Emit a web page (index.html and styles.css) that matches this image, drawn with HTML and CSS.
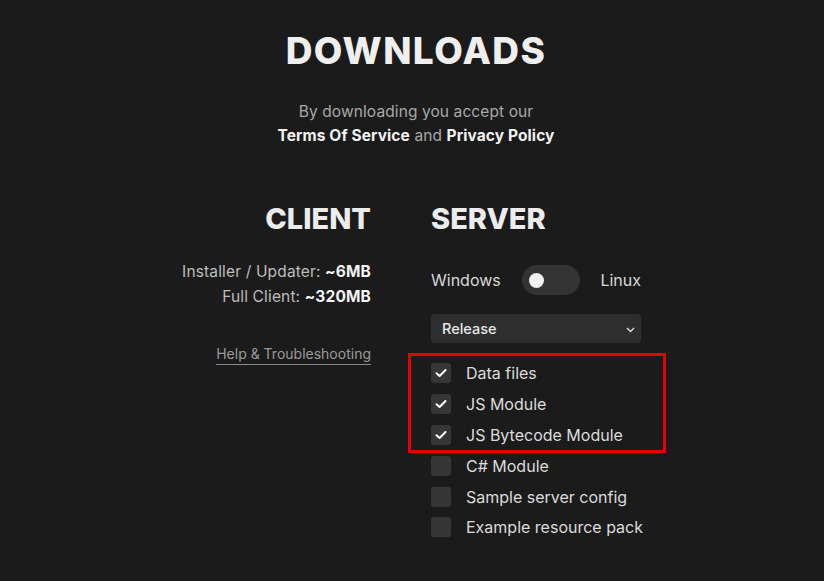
FILE: index.html
```html
<!DOCTYPE html>
<html lang="en">
<head>
<meta charset="utf-8">
<title>Downloads</title>
<link rel="stylesheet" href="styles.css">
</head>
<body>
<div class="page">
  <header class="header">
    <h1 class="title">DOWNLOADS</h1>
    <p class="terms">By downloading you accept our<br><a class="strong-link">Terms Of Service</a> and <a class="strong-link">Privacy Policy</a></p>
  </header>
  <main class="columns">
    <section class="col client">
      <h2 class="col-title">CLIENT</h2>
      <div class="info">
        <div>Installer / Updater: <b>~6MB</b></div>
        <div>Full Client: <b>~320MB</b></div>
      </div>
      <a class="help">Help &amp; Troubleshooting</a>
    </section>
    <section class="col server">
      <h2 class="col-title">SERVER</h2>
      <div class="os-row">
        <span class="os-label">Windows</span>
        <span class="toggle"><span class="knob"></span></span>
        <span class="os-label">Linux</span>
      </div>
      <div class="select">
        <span class="select-text">Release</span>
        <svg class="chevron" width="9" height="6" viewBox="0 0 9 6"><polyline points="1,1 4.5,4.5 8,1" fill="none" stroke="#ddd" stroke-width="1.4"/></svg>
      </div>
      <div class="checks">
        <div class="group">
          <label class="check-row"><span class="box on"><svg width="12" height="10" viewBox="0 0 12 10"><polyline points="1.5,5.2 4.6,8 10.5,2" fill="none" stroke="#fff" stroke-width="2" stroke-linecap="round" stroke-linejoin="round"/></svg></span>Data files</label>
          <label class="check-row"><span class="box on"><svg width="12" height="10" viewBox="0 0 12 10"><polyline points="1.5,5.2 4.6,8 10.5,2" fill="none" stroke="#fff" stroke-width="2" stroke-linecap="round" stroke-linejoin="round"/></svg></span>JS Module</label>
          <label class="check-row"><span class="box on"><svg width="12" height="10" viewBox="0 0 12 10"><polyline points="1.5,5.2 4.6,8 10.5,2" fill="none" stroke="#fff" stroke-width="2" stroke-linecap="round" stroke-linejoin="round"/></svg></span>JS Bytecode Module</label>
        </div>
        <label class="check-row"><span class="box"></span>C# Module</label>
        <label class="check-row"><span class="box"></span>Sample server config</label>
        <label class="check-row"><span class="box"></span>Example resource pack</label>
      </div>
    </section>
  </main>
</div>
</body>
</html>
```

FILE: styles.css
```css
* { box-sizing: border-box; }

html, body {
  margin: 0;
  padding: 0;
  height: 100%;
}

body {
  background: #1b1b1b;
  font-family: Inter, "Noto Sans", "Liberation Sans", sans-serif;
  color: #ddd;
  overflow: hidden;
}

.page {
  min-height: 581px;
}

.header {
  text-align: center;
  padding-top: 29px;
  padding-left: 8px;
}

.title {
  margin: 0;
  font-size: 37px;
  line-height: 44px;
  font-weight: 800;
  color: #efefef;
  letter-spacing: 1.4px;
}

.terms {
  margin: 27px 0 0;
  font-size: 15.5px;
  line-height: 24px;
  color: #a9a9a9;
  letter-spacing: 0.1px;
}

.strong-link {
  color: #f2f2f2;
  font-weight: 700;
}

.columns {
  display: flex;
  justify-content: center;
  gap: 60px;
  padding-right: 22px;
  margin-top: 53px;
}

.col {
  width: 210px;
  display: flex;
  flex-direction: column;
}

.client {
  align-items: flex-end;
  text-align: right;
}

.col-title {
  margin: 0;
  font-size: 29px;
  line-height: 35px;
  font-weight: 800;
  color: #ececec;
  letter-spacing: 0;
}

.info {
  margin-top: 23px;
  font-size: 15.5px;
  line-height: 25px;
  color: #bdbdbd;
  letter-spacing: 0.15px;
}

.info b {
  color: #f4f4f4;
  font-weight: 700;
}

.help {
  margin-top: 35px;
  font-size: 14px;
  line-height: 19px;
  color: #9a9a9a;
  border-bottom: 1px solid #8a8a8a;
  padding-bottom: 1px;
}

.os-row {
  margin-top: 29px;
  display: flex;
  align-items: center;
  height: 30px;
  gap: 21px;
}

.os-label {
  font-size: 16px;
  color: #d8d8d8;
}

.toggle {
  width: 60px;
  height: 30px;
  border-radius: 15px;
  background: #333333;
  display: flex;
  align-items: center;
  padding-left: 7px;
  margin-right: -1px;
}

.knob {
  width: 15px;
  height: 15px;
  border-radius: 50%;
  background: #f0f0f0;
}

.select {
  margin-top: 19px;
  height: 29px;
  border-radius: 4px;
  background: #2e2e2e;
  display: flex;
  align-items: center;
  justify-content: space-between;
  padding: 0 6px 0 11px;
}

.select-text {
  font-size: 14.5px;
  font-weight: 500;
  color: #e6e6e6;
}

.chevron {
  margin-top: 2px;
}

.checks {
  margin-top: 15px;
  display: flex;
  flex-direction: column;
}

.group {
  position: relative;
  display: flex;
  flex-direction: column;
}

.group::after {
  content: "";
  position: absolute;
  top: -5px;
  bottom: -3px;
  left: -23px;
  right: -25px;
  border: 3px solid #e60000;
  pointer-events: none;
}

.check-row {
  display: flex;
  align-items: center;
  height: 30.8px;
  font-size: 16px;
  color: #dcdcdc;
  white-space: nowrap;
}

.box {
  width: 20px;
  height: 20px;
  border-radius: 3px;
  background: #363636;
  margin-right: 15px;
  display: flex;
  align-items: center;
  justify-content: center;
  flex-shrink: 0;
}
```
